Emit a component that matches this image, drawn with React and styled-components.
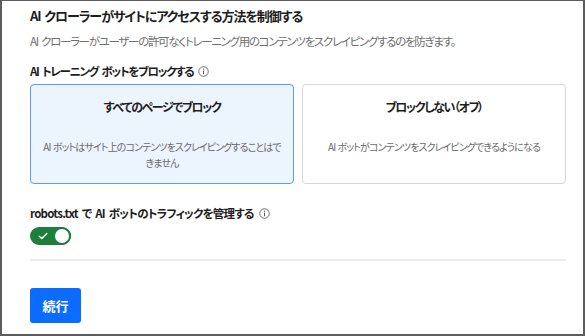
import React from 'react';
import styled, { createGlobalStyle } from 'styled-components';

const GlobalStyle = createGlobalStyle`
  body {
    margin: 0;
    background: #ffffff;
    font-family: "Noto Sans CJK JP", "Noto Sans", sans-serif;
    font-feature-settings: "palt";
  }
`;

// 선택지 카드 데이터
const options = [
  {
    id: 'block',
    title: 'すべてのページでブロック',
    desc: 'AI ボットはサイト上のコンテンツをスクレイピングすることはできません',
    selected: true,
  },
  {
    id: 'off',
    title: 'ブロックしない（オフ）',
    desc: 'AI ボットがコンテンツをスクレイピングできるようになる',
    selected: false,
  },
];

function InfoIcon() {
  return (
    <InfoSvg viewBox="0 0 12 12">
      <circle cx="6" cy="6" r="5.2" fill="none" stroke="#555" strokeWidth="0.9" />
      <circle cx="6" cy="3.5" r="0.7" fill="#555" />
      <rect x="5.45" y="5" width="1.1" height="3.9" fill="#555" />
    </InfoSvg>
  );
}

function App() {
  const [selected, setSelected] = React.useState('block');
  const [robots, setRobots] = React.useState(true);

  return (
    <Frame>
      <GlobalStyle />
      <Title>AI クローラーがサイトにアクセスする方法を制御する</Title>
      <Subtitle>AI クローラーがユーザーの許可なくトレーニング用のコンテンツをスクレイピングするのを防ぎます。</Subtitle>

      <Label spacing="-1.3px">
        AI トレーニング ボットをブロックする <InfoIcon />
      </Label>
      <CardRow>
        {options.map((opt) => (
          <Card key={opt.id} selected={selected === opt.id} onClick={() => setSelected(opt.id)}>
            <CardTitle>{opt.title}</CardTitle>
            <CardDesc>{opt.desc}</CardDesc>
          </Card>
        ))}
      </CardRow>

      <Label top="20px" spacing="-0.75px">
        robots.txt で AI ボットのトラフィックを管理する <InfoIcon />
      </Label>
      <Toggle on={robots} onClick={() => setRobots(!robots)}>
        <svg width="10" height="8" viewBox="0 0 10 8">
          <path d="M1.2 4.2 L3.8 6.6 L8.8 1.4" fill="none" stroke="#fff" strokeWidth="1.4" strokeLinecap="round" strokeLinejoin="round" />
        </svg>
        <Knob />
      </Toggle>

      <Divider />

      <Button>続行</Button>
    </Frame>
  );
}

const Frame = styled.div`
  width: 585px;
  height: 336px;
  box-sizing: border-box;
  border: 2px solid #5c5c5c;
  border-top-width: 1px;
  padding: 6px 17px 0 28px;
  display: flex;
  flex-direction: column;
  align-items: flex-start;
  overflow: hidden;
  word-spacing: 2px;
`;

const Title = styled.div`
  font-size: 13px;
  line-height: 18px;
  font-weight: 700;
  letter-spacing: -1.05px;
  color: #1d1d1d;
`;

const Subtitle = styled.div`
  margin-top: 7px;
  font-size: 11.5px;
  line-height: 18px;
  letter-spacing: -1.3px;
  color: #6e6e6e;
`;

const Label = styled.div`
  margin-top: ${(p) => p.top || '12px'};
  font-size: 11.5px;
  line-height: 18px;
  font-weight: 700;
  letter-spacing: ${(p) => p.spacing || '-1px'};
  color: #1d1d1d;
  display: flex;
  align-items: center;
  gap: 5px;
`;

const InfoSvg = styled.svg`
  width: 11px;
  height: 11px;
`;

const CardRow = styled.div`
  margin-top: 4px;
  width: 100%;
  display: grid;
  grid-template-columns: 1fr 1fr;
  gap: 8px;
`;

const Card = styled.div`
  box-sizing: border-box;
  height: 100px;
  padding: 13px 10px 0;
  border: 1px solid ${(p) => (p.selected ? '#5a9cf8' : '#d6d6d6')};
  background: ${(p) => (p.selected ? '#ecf4fe' : '#ffffff')};
  border-radius: 4px;
  text-align: center;
  cursor: pointer;
`;

const CardTitle = styled.div`
  font-size: 12px;
  line-height: 18px;
  font-weight: 700;
  letter-spacing: -1.4px;
  color: #1d1d1d;
`;

const CardDesc = styled.div`
  margin-top: 23px;
  font-size: 10px;
  line-height: 16px;
  letter-spacing: -0.9px;
  word-spacing: 1px;
  color: #6a6a6a;
`;

const Toggle = styled.button`
  margin-top: 5px;
  width: 41px;
  height: 18px;
  box-sizing: border-box;
  padding: 0 0 0 8px;
  border: none;
  border-radius: 9px;
  background: ${(p) => (p.on ? '#1e7f3c' : '#8a8a8a')};
  display: flex;
  align-items: center;
  justify-content: space-between;
  cursor: pointer;
`;

const Knob = styled.span`
  width: 18px;
  height: 18px;
  box-sizing: border-box;
  border-radius: 50%;
  background: #ffffff;
  border: 2px solid #1e7f3c;
`;

const Divider = styled.div`
  margin-top: 14px;
  width: 100%;
  height: 2px;
  background: #ececec;
`;

const Button = styled.button`
  margin-top: 27px;
  width: 51px;
  height: 35px;
  border: none;
  border-radius: 3px;
  background: #0b6cff;
  color: #ffffff;
  font-family: "Noto Sans CJK JP", sans-serif;
  font-size: 13px;
  font-weight: 700;
  cursor: pointer;
`;

export default App;
